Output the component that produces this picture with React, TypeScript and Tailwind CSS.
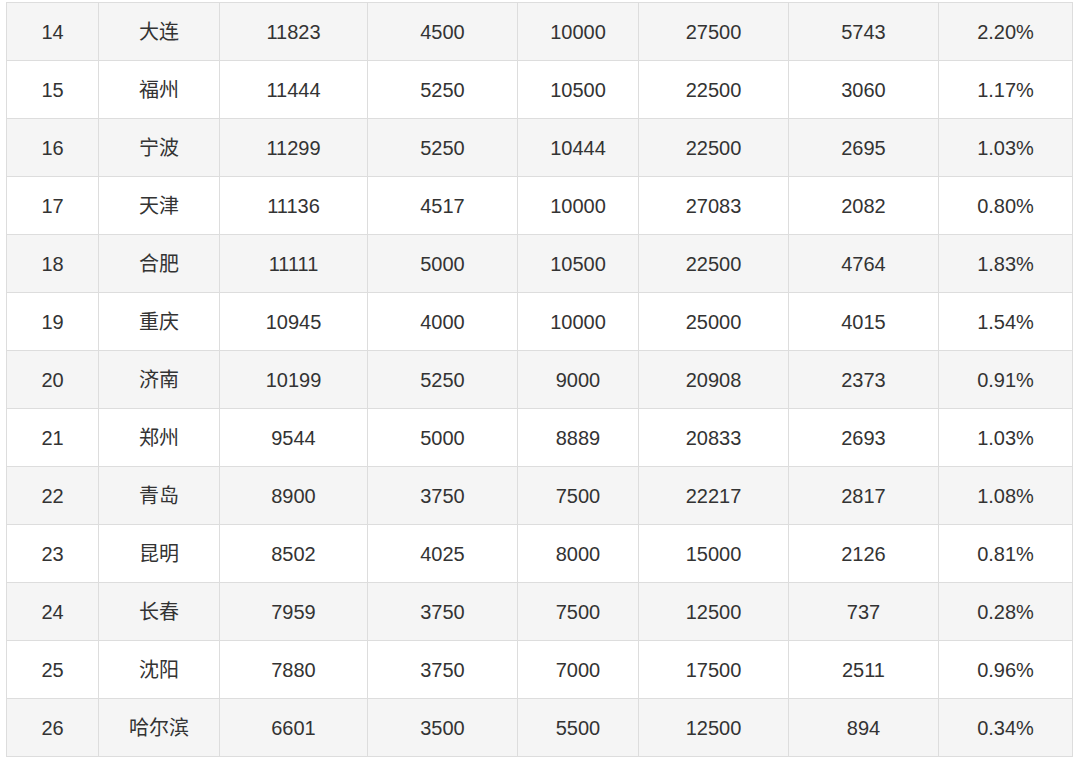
import React from "react";

const rows: (string | number)[][] = [
  [14, "大连", 11823, 4500, 10000, 27500, 5743, "2.20%"],
  [15, "福州", 11444, 5250, 10500, 22500, 3060, "1.17%"],
  [16, "宁波", 11299, 5250, 10444, 22500, 2695, "1.03%"],
  [17, "天津", 11136, 4517, 10000, 27083, 2082, "0.80%"],
  [18, "合肥", 11111, 5000, 10500, 22500, 4764, "1.83%"],
  [19, "重庆", 10945, 4000, 10000, 25000, 4015, "1.54%"],
  [20, "济南", 10199, 5250, 9000, 20908, 2373, "0.91%"],
  [21, "郑州", 9544, 5000, 8889, 20833, 2693, "1.03%"],
  [22, "青岛", 8900, 3750, 7500, 22217, 2817, "1.08%"],
  [23, "昆明", 8502, 4025, 8000, 15000, 2126, "0.81%"],
  [24, "长春", 7959, 3750, 7500, 12500, 737, "0.28%"],
  [25, "沈阳", 7880, 3750, 7000, 17500, 2511, "0.96%"],
  [26, "哈尔滨", 6601, 3500, 5500, 12500, 894, "0.34%"],
];

const widths = [92, 121, 148, 150, 121, 150, 150, 134];

export default function App() {
  return (
    <div
      className="w-[1080px] h-[763px] bg-white pt-[2px] pl-[6px] overflow-hidden"
      style={{ fontFamily: '"Liberation Sans", Arial, "Noto Sans CJK SC", sans-serif' }}
    >
      <table className="table-fixed border-collapse w-[1067px] text-[20px] text-[#333]">
        <colgroup>
          {widths.map((w, i) => (
            <col key={i} style={{ width: w }} />
          ))}
        </colgroup>
        <tbody>
          {rows.map((r, i) => (
            <tr key={i} className={i % 2 === 0 ? "bg-[#f5f5f5] h-[58px]" : "bg-white h-[58px]"}>
              {r.map((c, j) => (
                <td key={j} className="border border-[#dddddd] text-center align-middle p-0 leading-none">
                  {c}
                </td>
              ))}
            </tr>
          ))}
        </tbody>
      </table>
    </div>
  );
}
